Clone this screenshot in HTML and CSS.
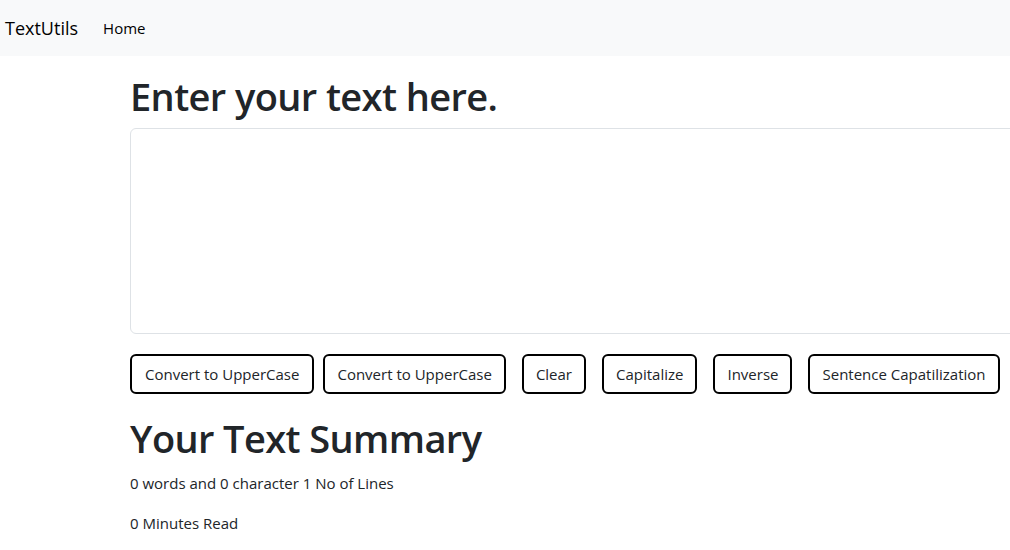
FILE: index.html
```html
<!DOCTYPE html>
<html lang="en">
<head>
<meta charset="utf-8">
<title>TextUtils</title>
<link rel="stylesheet" href="styles.css">
</head>
<body>
<nav class="navbar">
  <a class="brand" href="#">TextUtils</a>
  <a class="nav-link" href="#">Home</a>
</nav>
<main class="container">
  <h1 class="title">Enter your text here.</h1>
  <textarea class="text-box" rows="8"></textarea>
  <div class="actions">
    <button class="btn btn-tight">Convert to UpperCase</button>
    <button class="btn">Convert to UpperCase</button>
    <button class="btn">Clear</button>
    <button class="btn">Capitalize</button>
    <button class="btn">Inverse</button>
    <button class="btn">Sentence Capatilization</button>
  </div>
</main>
<section class="container summary">
  <h1 class="title">Your Text Summary</h1>
  <p class="line">0 words and 0 character 1 No of Lines</p>
  <p class="line">0 Minutes Read</p>
</section>
</body>
</html>
```
FILE: styles.css
```css
html, body {
  margin: 0;
  overflow: hidden;
}
body {
  font-family: "Open Sans", "Noto Sans", sans-serif;
  font-size: 16px;
  line-height: 1.5;
  color: #212529;
  background: #fff;
}
.navbar {
  height: 56px;
  background: #f8f9fa;
  display: flex;
  align-items: center;
  padding-left: 5px;
  box-sizing: border-box;
}
.brand {
  font-size: 18px;
  color: #000;
  text-decoration: none;
  margin-right: 25px;
}
.nav-link {
  font-size: 15px;
  color: #000;
  text-decoration: none;
}
.container {
  margin: 16px 0 16px 130px;
}
.title {
  font-size: 38px;
  font-weight: 600;
  letter-spacing: -0.6px;
  line-height: 48px;
  margin: 0 0 8px;
}
.text-box {
  display: block;
  width: 1140px;
  box-sizing: border-box;
  height: 206px;
  border: 1px solid #dee2e6;
  border-radius: 6px;
  padding: 6px 12px;
  font: inherit;
  resize: none;
  margin-bottom: 16px;
}
.actions {
  display: flex;
  white-space: nowrap;
}
.btn {
  font: inherit;
  font-size: 15px;
  color: #212529;
  background: #fff;
  border: 2px solid #000;
  border-radius: 6px;
  padding: 0 12px;
  height: 40px;
  margin: 4px 16px 4px 0;
}
.btn-tight {
  padding: 0 13px;
  margin-right: 9px;
}
.line {
  margin: 0 0 15px;
  padding-top: 1px;
  font-size: 15px;
  line-height: 24px;
}
.summary {
  margin-top: 16px;
}
```
